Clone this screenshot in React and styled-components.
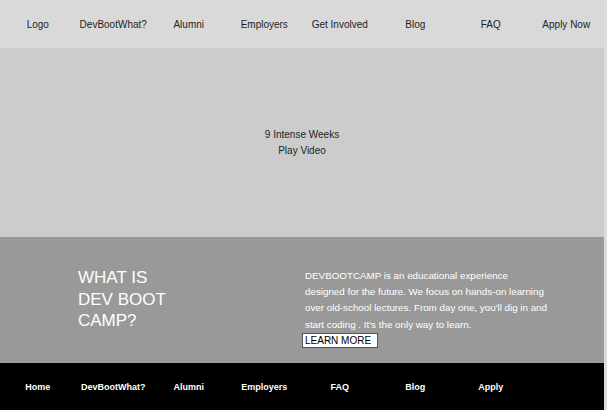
import styled, { createGlobalStyle } from 'styled-components'

const GlobalStyle = createGlobalStyle`
    html, body {
        margin: 0;
        padding: 0;
        background: #dcdcdc;
    }
    body {
        font-family: 'Liberation Sans', Arial, sans-serif;
    }
`

const Page = styled.div`
    width: 604px;
    display: flex;
    flex-direction: column;
`

const Header = styled.header`
    height: 48px;
    background: #d9d9d9;
    display: grid;
    grid-template-columns: repeat(8, 1fr);
    align-items: center;
`

const NavItem = styled.a`
    text-align: center;
    font-size: 10px;
    color: #1e1e1e;
    text-decoration: none;
    white-space: nowrap;
`

const Hero = styled.section`
    height: 189px;
    background: #cccccc;
    display: flex;
    flex-direction: column;
    align-items: center;
    justify-content: center;
    font-size: 10px;
    line-height: 16px;
    color: #1e1e1e;
`

const About = styled.section`
    height: 126px;
    box-sizing: border-box;
    background: #999999;
    padding: 28px 0 0 78px;
    display: grid;
    grid-template-columns: 224px 260px;
    align-items: start;
`

const Heading = styled.h2`
    margin: 2px 0 0;
    font-size: 17px;
    line-height: 21.5px;
    font-weight: 400;
    color: #fff;
`

const Blurb = styled.div`
    display: flex;
    flex-direction: column;
    align-items: flex-start;
    padding-top: 3px;
`

const Text = styled.p`
    margin: 0 0 0 3px;
    font-size: 9.8px;
    line-height: 16.2px;
    color: #fff;
    white-space: nowrap;
`

const LearnButton = styled.button`
    width: 76px;
    height: 15px;
    box-sizing: border-box;
    padding: 0 2px;
    border: 1px solid #555;
    background: #fff;
    color: #000;
    font-family: 'Liberation Sans', Arial, sans-serif;
    font-size: 10px;
    line-height: 13px;
    text-align: left;
`

const Footer = styled.footer`
    height: 47px;
    background: #000;
    display: grid;
    grid-template-columns: repeat(8, 1fr);
    align-items: center;
`

const FooterLink = styled.a`
    text-align: center;
    font-size: 9px;
    font-weight: 700;
    color: #fff;
    text-decoration: none;
    white-space: nowrap;
`

const navItems = ['Logo', 'DevBootWhat?', 'Alumni', 'Employers', 'Get Involved', 'Blog', 'FAQ', 'Apply Now']
const footerItems = ['Home', 'DevBootWhat?', 'Alumni', 'Employers', 'FAQ', 'Blog', 'Apply']

function App() {
    return (
        <>
            <GlobalStyle/>
            <Page>
                <Header>
                    {navItems.map((item) => (
                        <NavItem key={item}>{item}</NavItem>
                    ))}
                </Header>
                <Hero>
                    <div>9 Intense Weeks</div>
                    <div>Play Video</div>
                </Hero>
                <About>
                    <Heading>
                        WHAT IS<br/>DEV BOOT<br/>CAMP?
                    </Heading>
                    <Blurb>
                        <Text>
                            DEVBOOTCAMP is an educational experience<br/>
                            designed for the future. We focus on hands-on learning<br/>
                            over old-school lectures. From day one, you'll dig in and<br/>
                            start coding . It's the only way to learn.
                        </Text>
                        <LearnButton>LEARN MORE</LearnButton>
                    </Blurb>
                </About>
                <Footer>
                    {footerItems.map((item) => (
                        <FooterLink key={item}>{item}</FooterLink>
                    ))}
                </Footer>
            </Page>
        </>
    );
}

export default App;
